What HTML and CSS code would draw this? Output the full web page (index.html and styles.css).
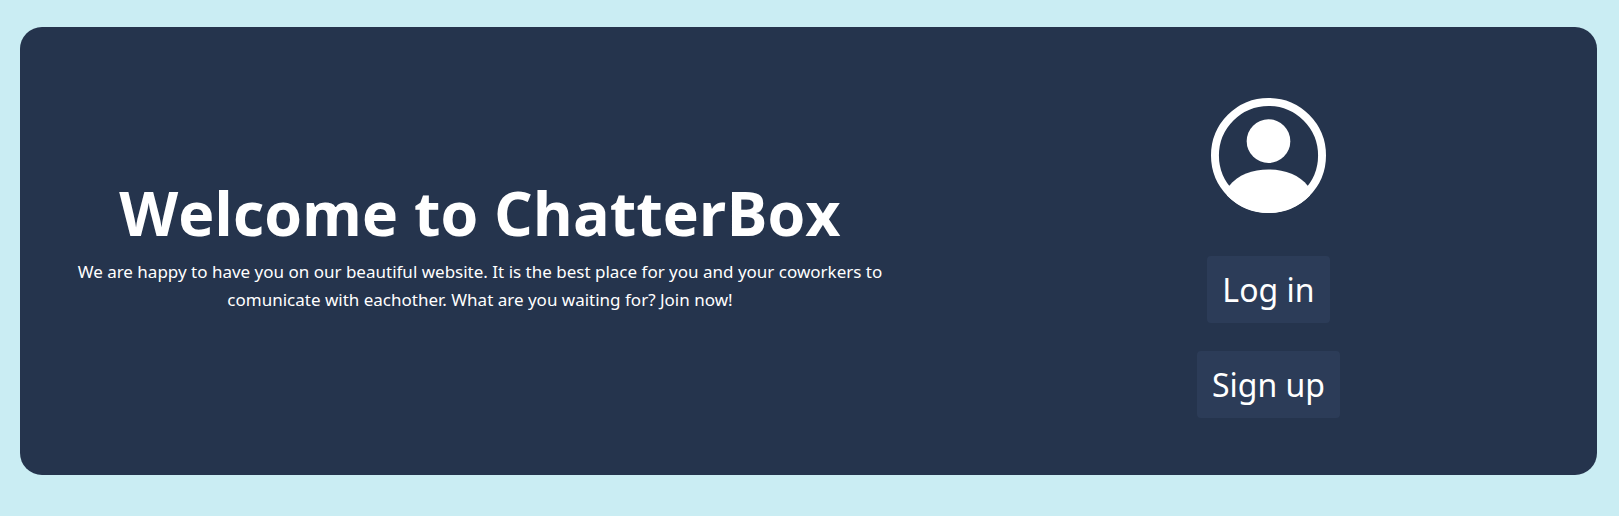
FILE: index.html
```html
<!DOCTYPE html>
<html lang="en">
<head>
<meta charset="utf-8">
<meta name="viewport" content="width=device-width, initial-scale=1">
<title>ChatterBox</title>
<link rel="stylesheet" href="styles.css">
</head>
<body>
<main class="hero">
  <section class="intro">
    <h1 class="title">Welcome to ChatterBox</h1>
    <p class="lead">We are happy to have you on our beautiful website. It is the best place for you and your coworkers to comunicate with eachother. What are you waiting for? Join now!</p>
  </section>
  <section class="account">
    <svg class="avatar" viewBox="0 0 116 116" aria-hidden="true">
      <circle cx="58" cy="58" r="54" fill="none" stroke="currentColor" stroke-width="8"/>
      <circle cx="58" cy="43.5" r="22" fill="currentColor"/>
      <path d="M18 89C27 77 42 72 58 72S89 77 98 89L100 98A58 58 0 0 1 16 98Z" fill="currentColor"/>
    </svg>
    <button class="btn" type="button">Log in</button>
    <button class="btn" type="button">Sign up</button>
  </section>
</main>
</body>
</html>
```
FILE: styles.css
```css
* {
  box-sizing: border-box;
}

body {
  margin: 0;
  background: #caedf3;
  color: #fff;
  font-family: "Segoe UI", "Noto Sans", "Open Sans", sans-serif;
}

.hero {
  display: grid;
  grid-template-columns: 7fr 5fr;
  margin: 27px 22px 40px 20px;
  padding: 71px 0 57px;
  border-radius: 22px;
  background: #25344d;
}

.intro {
  align-self: center;
  padding: 0 48px 28px;
  text-align: center;
}

.title {
  margin: 0;
  font-family: "Segoe UI", "Open Sans", sans-serif;
  font-size: 61px;
  font-weight: 700;
  line-height: 76px;
}

.lead {
  margin: 7px 0 0;
  font-size: 17px;
  line-height: 28px;
}

.account {
  display: flex;
  flex-direction: column;
  align-items: center;
  gap: 28px;
}

.avatar {
  display: block;
  width: 115px;
  height: 115px;
  margin-bottom: 15px;
}

.btn {
  padding: 10px 15px;
  border: 0;
  border-radius: 4px;
  background: #2c3c58;
  color: inherit;
  font: inherit;
  font-size: 32px;
  line-height: 47px;
  cursor: pointer;
}
```
